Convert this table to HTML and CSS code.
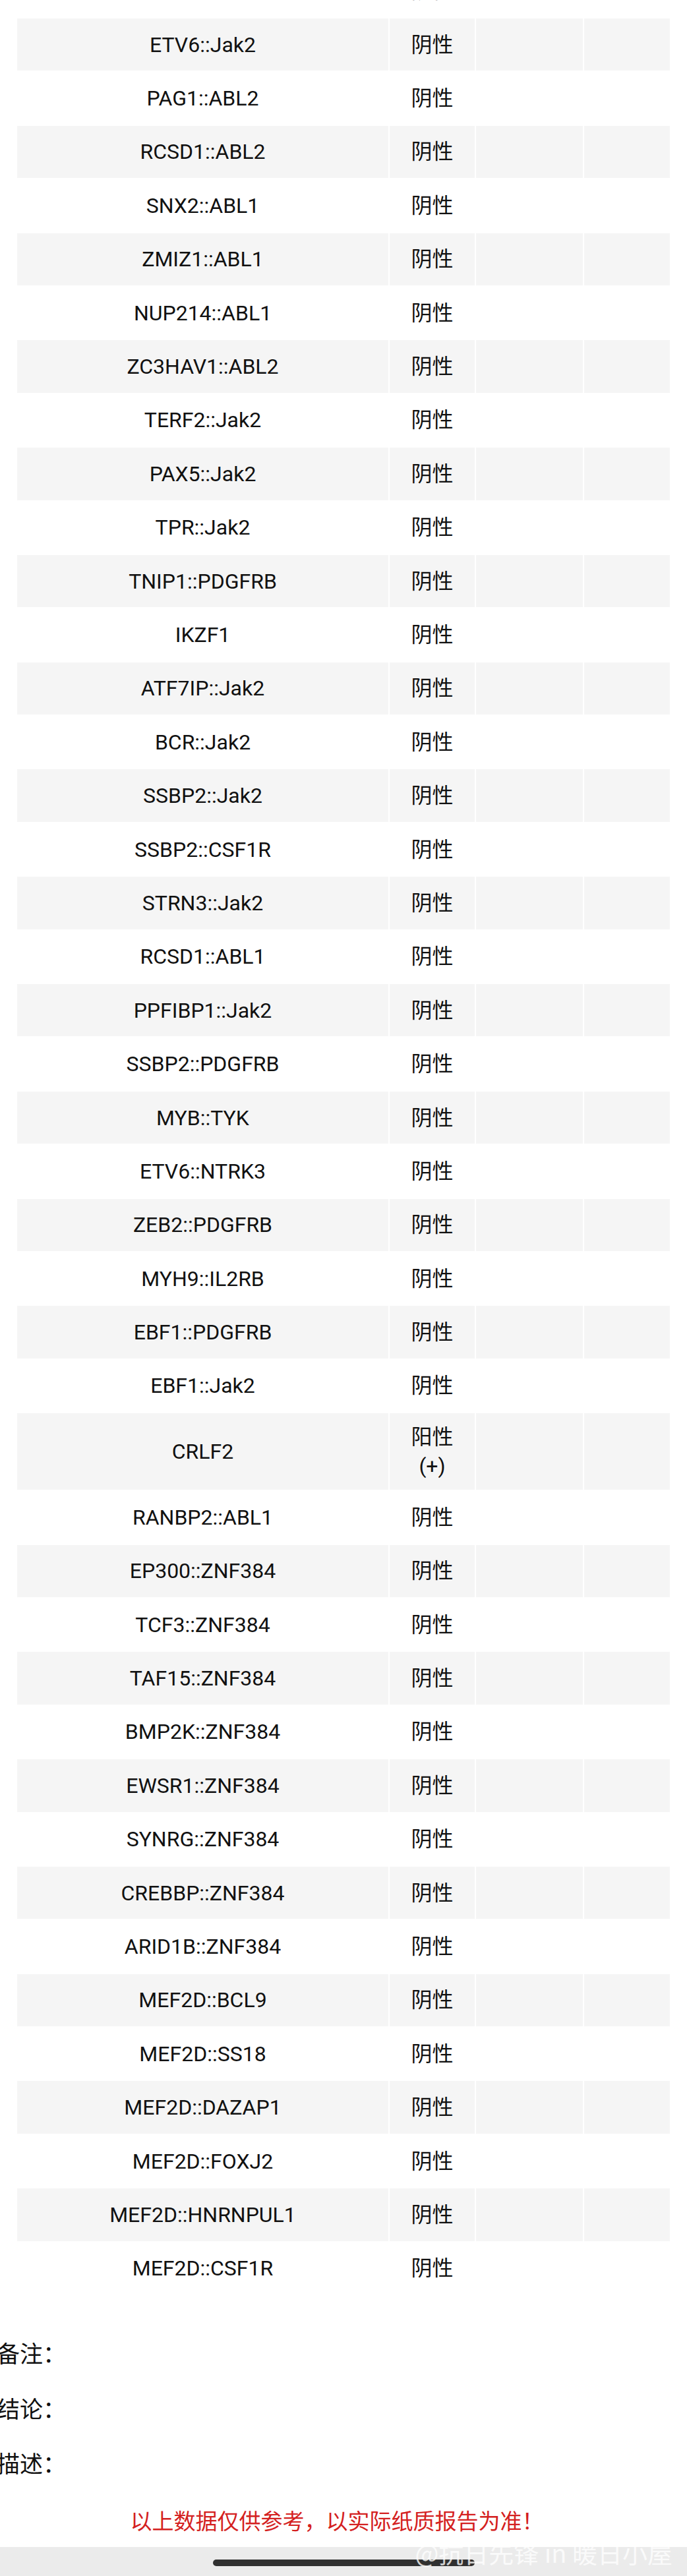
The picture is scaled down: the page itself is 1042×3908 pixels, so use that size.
FILE: index.html
```html
<!DOCTYPE html>
<html lang="zh-CN">
<head>
<meta charset="utf-8">
<title>检测结果</title>
<link rel="stylesheet" href="styles.css">
</head>
<body>
<div class="page">
  <table class="result-table">
    <colgroup>
      <col class="col-name">
      <col class="col-result">
      <col class="col-extra">
      <col class="col-extra2">
    </colgroup>
    <tbody>
      <tr><td class="name"></td><td class="result">阴性</td><td></td><td></td></tr>
      <tr class="alt"><td class="name">ETV6::Jak2</td><td class="result">阴性</td><td></td><td></td></tr>
      <tr><td class="name">PAG1::ABL2</td><td class="result">阴性</td><td></td><td></td></tr>
      <tr class="alt"><td class="name">RCSD1::ABL2</td><td class="result">阴性</td><td></td><td></td></tr>
      <tr><td class="name">SNX2::ABL1</td><td class="result">阴性</td><td></td><td></td></tr>
      <tr class="alt"><td class="name">ZMIZ1::ABL1</td><td class="result">阴性</td><td></td><td></td></tr>
      <tr><td class="name">NUP214::ABL1</td><td class="result">阴性</td><td></td><td></td></tr>
      <tr class="alt"><td class="name">ZC3HAV1::ABL2</td><td class="result">阴性</td><td></td><td></td></tr>
      <tr><td class="name">TERF2::Jak2</td><td class="result">阴性</td><td></td><td></td></tr>
      <tr class="alt"><td class="name">PAX5::Jak2</td><td class="result">阴性</td><td></td><td></td></tr>
      <tr><td class="name">TPR::Jak2</td><td class="result">阴性</td><td></td><td></td></tr>
      <tr class="alt"><td class="name">TNIP1::PDGFRB</td><td class="result">阴性</td><td></td><td></td></tr>
      <tr><td class="name">IKZF1</td><td class="result">阴性</td><td></td><td></td></tr>
      <tr class="alt"><td class="name">ATF7IP::Jak2</td><td class="result">阴性</td><td></td><td></td></tr>
      <tr><td class="name">BCR::Jak2</td><td class="result">阴性</td><td></td><td></td></tr>
      <tr class="alt"><td class="name">SSBP2::Jak2</td><td class="result">阴性</td><td></td><td></td></tr>
      <tr><td class="name">SSBP2::CSF1R</td><td class="result">阴性</td><td></td><td></td></tr>
      <tr class="alt"><td class="name">STRN3::Jak2</td><td class="result">阴性</td><td></td><td></td></tr>
      <tr><td class="name">RCSD1::ABL1</td><td class="result">阴性</td><td></td><td></td></tr>
      <tr class="alt"><td class="name">PPFIBP1::Jak2</td><td class="result">阴性</td><td></td><td></td></tr>
      <tr><td class="name">SSBP2::PDGFRB</td><td class="result">阴性</td><td></td><td></td></tr>
      <tr class="alt"><td class="name">MYB::TYK</td><td class="result">阴性</td><td></td><td></td></tr>
      <tr><td class="name">ETV6::NTRK3</td><td class="result">阴性</td><td></td><td></td></tr>
      <tr class="alt"><td class="name">ZEB2::PDGFRB</td><td class="result">阴性</td><td></td><td></td></tr>
      <tr><td class="name">MYH9::IL2RB</td><td class="result">阴性</td><td></td><td></td></tr>
      <tr class="alt"><td class="name">EBF1::PDGFRB</td><td class="result">阴性</td><td></td><td></td></tr>
      <tr><td class="name">EBF1::Jak2</td><td class="result">阴性</td><td></td><td></td></tr>
      <tr class="alt"><td class="name">CRLF2</td><td class="result">阳性(+)</td><td></td><td></td></tr>
      <tr><td class="name">RANBP2::ABL1</td><td class="result">阴性</td><td></td><td></td></tr>
      <tr class="alt"><td class="name">EP300::ZNF384</td><td class="result">阴性</td><td></td><td></td></tr>
      <tr><td class="name">TCF3::ZNF384</td><td class="result">阴性</td><td></td><td></td></tr>
      <tr class="alt"><td class="name">TAF15::ZNF384</td><td class="result">阴性</td><td></td><td></td></tr>
      <tr><td class="name">BMP2K::ZNF384</td><td class="result">阴性</td><td></td><td></td></tr>
      <tr class="alt"><td class="name">EWSR1::ZNF384</td><td class="result">阴性</td><td></td><td></td></tr>
      <tr><td class="name">SYNRG::ZNF384</td><td class="result">阴性</td><td></td><td></td></tr>
      <tr class="alt"><td class="name">CREBBP::ZNF384</td><td class="result">阴性</td><td></td><td></td></tr>
      <tr><td class="name">ARID1B::ZNF384</td><td class="result">阴性</td><td></td><td></td></tr>
      <tr class="alt"><td class="name">MEF2D::BCL9</td><td class="result">阴性</td><td></td><td></td></tr>
      <tr><td class="name">MEF2D::SS18</td><td class="result">阴性</td><td></td><td></td></tr>
      <tr class="alt"><td class="name">MEF2D::DAZAP1</td><td class="result">阴性</td><td></td><td></td></tr>
      <tr><td class="name">MEF2D::FOXJ2</td><td class="result">阴性</td><td></td><td></td></tr>
      <tr class="alt"><td class="name">MEF2D::HNRNPUL1</td><td class="result">阴性</td><td></td><td></td></tr>
      <tr><td class="name">MEF2D::CSF1R</td><td class="result">阴性</td><td></td><td></td></tr>
    </tbody>
  </table>

  <div class="remarks">
    <div class="remark-item">备注：</div>
    <div class="remark-item">结论：</div>
    <div class="remark-item">描述：</div>
  </div>

  <div class="notice">以上数据仅供参考，以实际纸质报告为准！</div>

  <div class="nav-bar">
    <div class="home-indicator"></div>
    <div class="watermark">@抗日先锋 in 暖日小屋</div>
  </div>
</div>
</body>
</html>
```

FILE: styles.css
```css
html, body {
  margin: 0;
  padding: 0;
  background: #ffffff;
}

body {
  font-family: Roboto, "Noto Sans CJK SC", sans-serif;
  color: #111111;
  overflow-x: hidden;
}

.page {
  position: relative;
  width: 1042px;
}

.result-table {
  table-layout: fixed;
  border-collapse: separate;
  border-spacing: 2px;
  width: 994px;
  margin: -55.4px 0 0 24px;
  font-size: 32px;
  line-height: 44px;
}

.col-name { width: 563px; }
.col-result { width: 129px; }
.col-extra { width: 162px; }
.col-extra2 { width: 130px; }

.result-table td {
  box-sizing: border-box;
  height: 79.4px;
  padding: 14px 16px;
  text-align: center;
  vertical-align: middle;
  background: #ffffff;
}

.result-table tr.alt td {
  background: #f5f5f5;
}

.remarks {
  margin-top: 44px;
  margin-left: -5px;
}

.remark-item {
  height: 83.5px;
  line-height: 83.5px;
  font-size: 35px;
  font-family: "Noto Sans CJK SC", sans-serif;
}

.notice {
  box-sizing: border-box;
  height: 86px;
  padding: 4px 20px 0 0;
  display: flex;
  align-items: center;
  justify-content: center;
  font-size: 33px;
  font-family: "Noto Sans CJK SC", sans-serif;
  color: #d42020;
}

.nav-bar {
  position: relative;
  box-sizing: border-box;
  height: 44px;
  padding-top: 19px;
  background: #ebebeb;
  display: flex;
  justify-content: center;
  align-items: flex-start;
}

.home-indicator {
  width: 397px;
  height: 10px;
  border-radius: 5px;
  background: #303030;
}

.watermark {
  position: absolute;
  right: 22px;
  top: -16px;
  font-family: "Noto Sans CJK SC", sans-serif;
  font-size: 38px;
  line-height: 48px;
  color: rgba(255, 255, 255, 0.78);
  white-space: nowrap;
}
```
